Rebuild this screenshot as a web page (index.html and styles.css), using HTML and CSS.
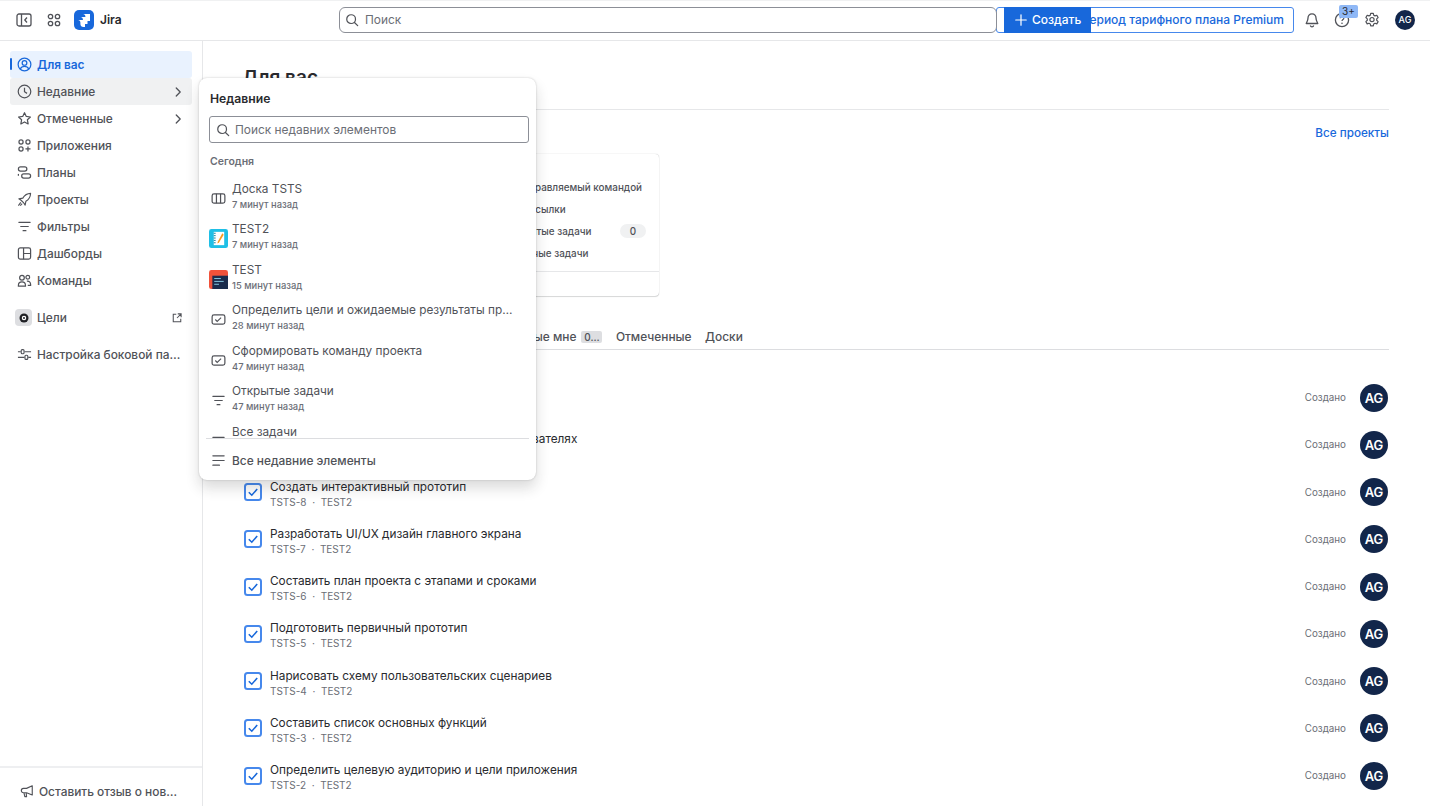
FILE: index.html
```html
<!DOCTYPE html>
<html lang="ru">
<head>
<meta charset="utf-8">
<title>Jira</title>
<link rel="stylesheet" href="styles.css">
</head>
<body>
<svg class="defs" width="0" height="0" aria-hidden="true">
  <symbol id="task" viewBox="0 0 18 18"><rect x="1" y="1" width="16" height="16" rx="2.5" fill="#fff" stroke="#4688ec" stroke-width="2"/><path d="M4.8 9.2l3 3 5.4-6.2" fill="none" stroke="#1868db" stroke-width="1.6"/></symbol>
  <symbol id="filter" viewBox="0 0 16 16"><path d="M2 3.5h12M4 8h8M6.5 12.5h3" fill="none" stroke="currentColor" stroke-width="1.3" stroke-linecap="round"/></symbol>
  <symbol id="chev" viewBox="0 0 16 16"><path d="M6 3.5L10.5 8 6 12.5" fill="none" stroke="currentColor" stroke-width="1.5" stroke-linecap="round" stroke-linejoin="round"/></symbol>
  <symbol id="mini" viewBox="0 0 16 16"><rect x="1.2" y="3" width="13.6" height="10" rx="2" fill="none" stroke="currentColor" stroke-width="1.3"/><path d="M4.6 8l2 2 4.2-4" fill="none" stroke="currentColor" stroke-width="1.2"/></symbol>
  <symbol id="search" viewBox="0 0 16 16"><circle cx="7" cy="7" r="5" fill="none" stroke="currentColor" stroke-width="1.4"/><path d="M10.8 10.8L14.5 14.5" stroke="currentColor" stroke-width="1.4" stroke-linecap="round"/></symbol>
</svg>

<header class="topbar">
  <div class="top-left">
    <svg class="ic" viewBox="0 0 16 16"><rect x="1" y="2" width="14" height="12" rx="2" fill="none" stroke="currentColor" stroke-width="1.3"/><path d="M5.5 2v12" stroke="currentColor" stroke-width="1.3"/><path d="M11 5.5L8.8 8l2.2 2.5" fill="none" stroke="currentColor" stroke-width="1.3"/></svg>
    <svg class="ic" viewBox="0 0 16 16"><g fill="none" stroke="currentColor" stroke-width="1.3"><circle cx="4.500" cy="4.500" r="2.200"/><circle cx="11.500" cy="4.500" r="2.200"/><circle cx="4.500" cy="11.500" r="2.200"/><circle cx="11.500" cy="11.500" r="2.200"/></g></svg>
    <div class="brand">
      <svg class="logo" viewBox="0 0 20 20"><rect width="20" height="20" rx="5" fill="#1868db"/><path d="M9 4h7v7h-1.600c-1.700 0-3-1.300-3-3V6.500C11.400 5.100 10.400 4 9 4zM6.500 7H13.500v7h-1.600c-1.700 0-3-1.300-3-3V9.500C8.900 8.100 7.900 7 6.500 7zM4 10h7v7H9.400c-1.700 0-3-1.300-3-3v-1.500C6.400 11.100 5.400 10 4 10z" fill="#fff"/></svg>
      <span class="brand-name">Jira</span>
    </div>
  </div>
  <div class="top-center">
    <div class="global-search">
      <svg class="ic-search" viewBox="0 0 16 16"><use href="#search"/></svg>
      <span>Поиск</span>
    </div>
    <div class="premium">Пробный период тарифного плана Premium</div>
    <button class="create"><svg class="plus" viewBox="0 0 16 16"><path d="M8 2v12M2 8h12" stroke="#fff" stroke-width="1.400" stroke-linecap="round"/></svg>Создать</button>
  </div>
  <div class="top-right">
    <svg class="ic" viewBox="0 0 16 16"><path d="M8 1.800c-2.600 0-4 2-4 4.200 0 3-1.500 4.500-1.800 5.500h11.600C13.500 10.500 12 9 12 6c0-2.200-1.400-4.200-4-4.200zM6.300 13.500c.3 1 1 1.300 1.700 1.300s1.400-.3 1.700-1.300" fill="none" stroke="currentColor" stroke-width="1.300" stroke-linejoin="round"/></svg>
    <div class="help">
      <svg class="ic" viewBox="0 0 16 16"><circle cx="8" cy="8" r="6.600" fill="none" stroke="currentColor" stroke-width="1.300"/><path d="M6.200 6.300c0-1 .8-1.700 1.800-1.700s1.800.7 1.800 1.600c0 1.300-1.800 1.400-1.800 2.800" fill="none" stroke="currentColor" stroke-width="1.200"/><circle cx="8" cy="11.300" r=".8" fill="currentColor"/></svg>
      <span class="badge">3+</span>
    </div>
    <svg class="ic" viewBox="0 0 16 16"><path d="M6.700 1.300h2.600l.4 1.900 1.300.7 1.800-.6 1.300 2.300-1.400 1.300v1.400l1.400 1.300-1.300 2.300-1.800-.6-1.300.7-.4 1.900H6.700l-.4-1.900-1.300-.7-1.800.6-1.300-2.300 1.400-1.300V6.900L1.900 5.600l1.300-2.300 1.800.6 1.300-.7z" fill="none" stroke="currentColor" stroke-width="1.200" stroke-linejoin="round"/><circle cx="8" cy="7.600" r="2.100" fill="none" stroke="currentColor" stroke-width="1.200"/></svg>
    <span class="avatar-small">AG</span>
  </div>
</header>

<div class="body-row">
  <aside class="sidebar">
    <nav class="nav">
      <a class="nav-item active"><svg class="ic" viewBox="0 0 16 16"><g fill="none" stroke="currentColor" stroke-width="1.300"><circle cx="8" cy="8" r="6.800"/><circle cx="8" cy="6.300" r="2.500"/><path d="M3.500 12.800c1-2 2.600-2.700 4.500-2.700s3.500.7 4.500 2.700"/></g></svg>Для вас</a>
      <a class="nav-item hover"><svg class="ic" viewBox="0 0 16 16"><circle cx="8" cy="8" r="6.700" fill="none" stroke="currentColor" stroke-width="1.300"/><path d="M8 4v4.300l2.700 1.700" fill="none" stroke="currentColor" stroke-width="1.300"/></svg>Недавние<svg class="chev" viewBox="0 0 16 16"><use href="#chev"/></svg></a>
      <a class="nav-item"><svg class="ic" viewBox="0 0 16 16"><path d="M8 1.800l1.900 4 4.400.6-3.200 3 .8 4.400L8 11.700l-3.900 2.100.8-4.400-3.200-3 4.400-.6z" fill="none" stroke="currentColor" stroke-width="1.300" stroke-linejoin="round"/></svg>Отмеченные<svg class="chev" viewBox="0 0 16 16"><use href="#chev"/></svg></a>
      <a class="nav-item"><svg class="ic" viewBox="0 0 16 16"><g fill="none" stroke="currentColor" stroke-width="1.300"><circle cx="4.300" cy="4.300" r="2.200"/><circle cx="11.700" cy="4.300" r="2.200"/><circle cx="4.300" cy="11.700" r="2.200"/><path d="M11.700 9v5.400M9 11.700h5.400"/></g></svg>Приложения</a>
      <a class="nav-item"><svg class="ic" viewBox="0 0 16 16"><g fill="none" stroke="currentColor" stroke-width="1.300"><rect x="1.500" y="2" width="9" height="4.500" rx="2.200"/><rect x="5" y="9.500" width="9.500" height="4.500" rx="2.200"/><path d="M1.500 9.500v2"/></g></svg>Планы</a>
      <a class="nav-item"><svg class="ic" viewBox="0 0 16 16"><g fill="none" stroke="currentColor" stroke-width="1.200" stroke-linejoin="round"><path d="M14.500 1.500c-4 .2-6.500 2-8.300 5L2 7.300l2.300 1.500 2.900 2.900 1.500 2.300.8-4.200c3-1.800 4.800-4.300 5-8.300z"/><path d="M4 11l-2.500 3.500M5.500 12.500L3.500 14.500"/></g></svg>Проекты</a>
      <a class="nav-item"><svg class="ic" viewBox="0 0 16 16"><use href="#filter"/></svg>Фильтры</a>
      <a class="nav-item"><svg class="ic" viewBox="0 0 16 16"><g fill="none" stroke="currentColor" stroke-width="1.300"><rect x="1.500" y="2" width="13" height="12" rx="2"/><path d="M7 2v12M7 8h7.500"/></g></svg>Дашборды</a>
      <a class="nav-item"><svg class="ic" viewBox="0 0 16 16"><g fill="none" stroke="currentColor" stroke-width="1.300"><circle cx="5.300" cy="5" r="2.500"/><circle cx="11.500" cy="4.600" r="2"/><path d="M1.500 14v-1c0-2 1.600-3.500 3.800-3.500s3.700 1.500 3.700 3.500v1zM10.500 8.700c2.500-.4 4 1.200 4 3.400v1h-3"/></g></svg>Команды</a>
      <a class="nav-item goals"><span class="goal-ic"><svg viewBox="0 0 16 16"><circle cx="8" cy="8" r="6" fill="#1f2024"/><circle cx="8" cy="8" r="3" fill="#fff"/><circle cx="8" cy="8" r="1.300" fill="#1f2024"/></svg></span>Цели<svg class="ext" viewBox="0 0 16 16"><path d="M7 3H3v10h10V9M9 2.500h4.500V7M13.500 2.500L8 8" fill="none" stroke="currentColor" stroke-width="1.400"/></svg></a>
      <a class="nav-item custom"><svg class="ic" viewBox="0 0 16 16"><g fill="none" stroke="currentColor" stroke-width="1.200"><path d="M1 5h3M8 5h7M1 11h7M12 11h3"/><rect x="4.500" y="2.800" width="3" height="4.400" rx="1"/><rect x="8.500" y="8.800" width="3" height="4.400" rx="1"/></g></svg><span class="clip">Настройка боковой панели</span></a>
    </nav>
    <div class="side-foot">
      <svg class="ic" viewBox="0 0 16 16"><path d="M14 2v10.500L7.500 10H4a2.500 2.500 0 0 1 0-5h3.500zM4.500 10l1 4.500h2L7 10" fill="none" stroke="currentColor" stroke-width="1.300" stroke-linejoin="round"/></svg>
      <span class="clip">Оставить отзыв о новом интерфейсе</span>
    </div>
  </aside>

  <main class="main">
    <h1 class="page-title">Для вас</h1>
    <div class="section-head"><a class="all-link">Все проекты</a></div>
    <div class="cards">
      <div class="card card-ghost"></div>
      <div class="card">
        <div class="card-body">
          <div class="card-line">Проект, управляемый командой</div>
          <div class="card-line">Быстрые ссылки</div>
          <div class="card-line">Мои открытые задачи<span class="pill">0</span></div>
          <div class="card-line">Выполненные задачи</div>
        </div>
        <div class="card-foot">1 доска</div>
      </div>
    </div>
    <div class="tabs">
      <span>Работал над</span>
      <span>Просмотрено</span>
      <span>Назначенные мне<b class="tab-count">0…</b></span>
      <span>Отмеченные</span>
      <span>Доски</span>
    </div>
    <ul class="rows">
      <li class="row"><svg class="chk"><use href="#task"/></svg><div class="row-text"><div class="row-title">Запустить бета-тестирование</div><div class="row-sub">TSTS-10 &nbsp;·&nbsp; TEST2</div></div><span class="status">Создано</span><span class="avatar">AG</span></li>
      <li class="row"><svg class="chk"><use href="#task"/></svg><div class="row-text"><div class="row-title">Провести опрос и получить данные о пользователях</div><div class="row-sub">TSTS-9 &nbsp;·&nbsp; TEST2</div></div><span class="status">Создано</span><span class="avatar">AG</span></li>
      <li class="row"><svg class="chk"><use href="#task"/></svg><div class="row-text"><div class="row-title">Создать интерактивный прототип</div><div class="row-sub">TSTS-8 &nbsp;·&nbsp; TEST2</div></div><span class="status">Создано</span><span class="avatar">AG</span></li>
      <li class="row"><svg class="chk"><use href="#task"/></svg><div class="row-text"><div class="row-title">Разработать UI/UX дизайн главного экрана</div><div class="row-sub">TSTS-7 &nbsp;·&nbsp; TEST2</div></div><span class="status">Создано</span><span class="avatar">AG</span></li>
      <li class="row"><svg class="chk"><use href="#task"/></svg><div class="row-text"><div class="row-title">Составить план проекта с этапами и сроками</div><div class="row-sub">TSTS-6 &nbsp;·&nbsp; TEST2</div></div><span class="status">Создано</span><span class="avatar">AG</span></li>
      <li class="row"><svg class="chk"><use href="#task"/></svg><div class="row-text"><div class="row-title">Подготовить первичный прототип</div><div class="row-sub">TSTS-5 &nbsp;·&nbsp; TEST2</div></div><span class="status">Создано</span><span class="avatar">AG</span></li>
      <li class="row"><svg class="chk"><use href="#task"/></svg><div class="row-text"><div class="row-title">Нарисовать схему пользовательских сценариев</div><div class="row-sub">TSTS-4 &nbsp;·&nbsp; TEST2</div></div><span class="status">Создано</span><span class="avatar">AG</span></li>
      <li class="row"><svg class="chk"><use href="#task"/></svg><div class="row-text"><div class="row-title">Составить список основных функций</div><div class="row-sub">TSTS-3 &nbsp;·&nbsp; TEST2</div></div><span class="status">Создано</span><span class="avatar">AG</span></li>
      <li class="row"><svg class="chk"><use href="#task"/></svg><div class="row-text"><div class="row-title">Определить целевую аудиторию и цели приложения</div><div class="row-sub">TSTS-2 &nbsp;·&nbsp; TEST2</div></div><span class="status">Создано</span><span class="avatar">AG</span></li>
    </ul>
  </main>
</div>

<section class="popup">
  <div class="popup-title">Недавние</div>
  <div class="popup-search"><svg class="ic-search" viewBox="0 0 16 16"><use href="#search"/></svg><span>Поиск недавних элементов</span></div>
  <div class="popup-list">
    <div class="popup-group">Сегодня</div>
    <div class="pitem"><span class="pico"><svg class="ic" viewBox="0 0 16 16"><g fill="none" stroke="currentColor" stroke-width="1.300"><rect x="1.200" y="3" width="13.600" height="10" rx="2"/><path d="M5.800 3v10M10.200 3v10"/></g></svg></span><div class="ptext"><div class="ptitle">Доска TSTS</div><div class="psub">7 минут назад</div></div></div>
    <div class="pitem"><span class="pico"><svg class="proj" viewBox="0 0 20 20"><rect width="20" height="20" rx="2.500" fill="#1fbfe6"/><rect x="5" y="3" width="11" height="14" fill="#fff"/><path d="M5 4.500h2M5 7h2M5 9.500h2M5 12h2M5 14.500h2" stroke="#0f7f9e" stroke-width="1"/><path d="M14 4.500L9.500 13l-.8 2.300 2-1.400L15.500 6z" fill="#f79a1f"/></svg></span><div class="ptext"><div class="ptitle">TEST2</div><div class="psub">7 минут назад</div></div></div>
    <div class="pitem"><span class="pico"><svg class="proj" viewBox="0 0 20 20"><rect width="20" height="20" rx="2.500" fill="#f1523a"/><rect x="3.500" y="6" width="16.500" height="14" fill="#1b2c4c"/><path d="M5.500 9h7M5.500 12h10M5.500 15h5" stroke="#8bd0e8" stroke-width="1"/></svg></span><div class="ptext"><div class="ptitle">TEST</div><div class="psub">15 минут назад</div></div></div>
    <div class="pitem"><span class="pico"><svg class="ic" viewBox="0 0 16 16"><use href="#mini"/></svg></span><div class="ptext"><div class="ptitle">Определить цели и ожидаемые результаты проекта</div><div class="psub">28 минут назад</div></div></div>
    <div class="pitem"><span class="pico"><svg class="ic" viewBox="0 0 16 16"><use href="#mini"/></svg></span><div class="ptext"><div class="ptitle">Сформировать команду проекта</div><div class="psub">47 минут назад</div></div></div>
    <div class="pitem"><span class="pico"><svg class="ic" viewBox="0 0 16 16"><use href="#filter"/></svg></span><div class="ptext"><div class="ptitle">Открытые задачи</div><div class="psub">47 минут назад</div></div></div>
    <div class="pitem"><span class="pico"><svg class="ic" viewBox="0 0 16 16"><use href="#filter"/></svg></span><div class="ptext"><div class="ptitle">Все задачи</div><div class="psub">47 минут назад</div></div></div>
  </div>
  <div class="popup-foot"><svg class="ic" viewBox="0 0 16 16"><path d="M2 3h12M2 8h12M2 13h7" fill="none" stroke="currentColor" stroke-width="1.300" stroke-linecap="round"/></svg>Все недавние элементы</div>
</section>
</body>
</html>
```

FILE: styles.css
```css
* { box-sizing: border-box; }
html, body { margin: 0; height: 100%; overflow: hidden; }
body {
  font-family: Inter, "Noto Sans", sans-serif;
  font-size: 11.900px;
  color: #292a2e;
  background: #fff;
  display: flex;
  flex-direction: column;
}
.defs { position: absolute; }
svg { display: block; flex: none; }
.ic { width: 16px; height: 16px; color: #505258; }

.topbar {
  height: 41px;
  flex: none;
  display: flex;
  align-items: center;
  border-top: 1px solid #f0f1f2;
  border-bottom: 1px solid #e6e7e9;
  padding-bottom: 2px;
  position: relative;
}
.top-left { display: flex; align-items: center; width: 339px; padding-left: 16px; gap: 14px; }
.brand { display: flex; align-items: center; gap: 6px; margin-left: -2px; }
.logo { width: 20px; height: 20px; }
.brand-name { font-weight: 600; font-size: 12px; }
.top-center { display: flex; position: relative; width: 955px; height: 26px; }
.global-search {
  width: 658px;
  border: 1px solid #8c8f97;
  border-radius: 6px;
  display: flex;
  align-items: center;
  gap: 6px;
  padding-left: 5px;
  color: #6b6e76;
  background: #fff;
  position: relative;
  z-index: 1;
}
.ic-search { width: 14px; height: 14px; color: #505258; }
.premium {
  width: 298px;
  margin-left: -1px;
  border: 1px solid #4688ec;
  border-radius: 3px;
  color: #1868db;
  display: flex;
  align-items: center;
  justify-content: flex-end;
  padding-right: 9px;
  white-space: nowrap;
  font-size: 12px;
  font-weight: 500;
}
.create {
  position: absolute;
  left: 665px;
  top: 0;
  width: 87px;
  height: 26px;
  border: 0;
  background: #1868db;
  color: #fff;
  font: 500 12px Inter, sans-serif;
  display: flex;
  align-items: center;
  gap: 4px;
  padding: 0 0 0 10px;
  z-index: 1;
}
.plus { width: 14px; height: 14px; }
.top-right { display: flex; align-items: center; gap: 14px; padding-left: 10px; }
.help { position: relative; }
.badge {
  position: absolute;
  left: 5px;
  top: -7px;
  width: 19px;
  height: 13px;
  border-radius: 2px;
  background: #8fb8f6;
  color: #292a2e;
  font-size: 10px;
  line-height: 13px;
  text-align: center;
}
.avatar-small {
  width: 20px;
  height: 20px;
  margin-left: 1px;
  border-radius: 50%;
  background: #12264a;
  color: #fff;
  font-size: 9px;
  font-weight: 500;
  line-height: 20px;
  text-align: center;
}

.body-row { flex: 1; display: flex; min-height: 0; }
.sidebar {
  width: 203px;
  flex: none;
  border-right: 1px solid #e6e7e9;
  display: flex;
  flex-direction: column;
}
.nav { flex: 1; padding: 10px 10px 0; min-height: 0; }
.nav-item {
  height: 27px;
  display: flex;
  align-items: center;
  gap: 5px;
  padding-left: 7px;
  padding-right: 7px;
  border-radius: 3px;
  color: #505258;
  font-weight: 500;
  white-space: nowrap;
  position: relative;
}
.nav-item .ic { width: 15px; height: 15px; }
.nav-item.active { background: #e9f2fe; color: #1868db; font-weight: 600; }
.nav-item.active .ic { color: #1868db; }
.nav-item.active::before {
  content: "";
  position: absolute;
  left: 0;
  top: 7px;
  width: 2px;
  height: 12px;
  background: #1868db;
  border-radius: 1px;
}
.nav-item.hover { background: #f0f1f2; }
.chev { width: 14px; height: 14px; margin-left: auto; color: #505258; }
.goals { margin-top: 10px; padding-left: 5px; gap: 5px; }
.goal-ic {
  width: 17px;
  height: 17px;
  border-radius: 4px;
  background: #dddee1;
  display: flex;
  align-items: center;
  justify-content: center;
}
.goal-ic svg { width: 12px; height: 12px; }
.ext { width: 12px; height: 12px; margin-left: auto; color: #505258; margin-right: 2px; }
.custom { margin-top: 10px; padding-right: 8px; }
.clip { overflow: hidden; text-overflow: ellipsis; white-space: nowrap; min-width: 0; }
.side-foot {
  height: 40px;
  border-top: 2px solid #eeeff1;
  display: flex;
  align-items: center;
  gap: 5px;
  padding: 8px 23px 0 20px;
  color: #505258;
  font-weight: 500;
}
.side-foot .ic { width: 14px; height: 14px; }

.main { flex: 1; min-width: 0; padding: 0 41px 0 41px; overflow: hidden; }
.page-title {
  margin: 0;
  height: 69px;
  padding-top: 25px;
  font-size: 19px;
  line-height: 24px;
  font-weight: 600;
  text-indent: -2px;
  border-bottom: 1px solid #e6e7e9;
}
.section-head { height: 44px; padding-top: 1px; display: flex; justify-content: flex-end; align-items: center; }
.all-link { color: #1868db; font-weight: 500; font-size: 11.700px; }
.cards { display: flex; gap: 1px; height: 142px; }
.card {
  width: 207px;
  border-radius: 4px;
  box-shadow: 0 0 1px rgba(30, 31, 33, .35), 0 1px 1px rgba(30, 31, 33, .15);
  display: flex;
  flex-direction: column;
  background: #fff;
}
.card-body { flex: 1; padding: 22px 13px 0 31px; }
.card-line {
  height: 22px;
  font-size: 9.900px;
  display: flex;
  align-items: center;
  justify-content: space-between;
  color: #505258;
  font-weight: 500;
  white-space: nowrap;
}
.pill {
  width: 26px;
  height: 14px;
  border-radius: 7px;
  background: #f0f1f2;
  text-align: center;
  line-height: 14px;
}
.card-foot { height: 25px; border-top: 1px solid #e6e7e9; padding: 5px 10px 5px 47px; font-size: 10px; color: #505258; }
.tabs {
  margin-top: 30px;
  height: 24px;
  display: flex;
  gap: 13.500px;
  padding-left: 45px;
  border-bottom: 1px solid #dcdde0;
  color: #505258;
  font-weight: 500;
  line-height: 22px;
  white-space: nowrap;
}
.tab-count {
  display: inline-block;
  width: 21px;
  height: 12px;
  margin-left: 5px;
  background: #dddee1;
  border-radius: 2px;
  font-size: 10px;
  line-height: 12px;
  text-align: center;
  font-weight: 500;
}
.rows { list-style: none; margin: 24px 0 0; padding: 0; }
.row { height: 47.250px; display: flex; align-items: center; }
.chk { width: 18px; height: 18px; margin-left: 0; margin-right: 8px; }
.row-text { flex: 1; min-width: 0; margin-top: 3px; }
.row-title { font-size: 11.800px; line-height: 16px; font-weight: 400; color: #292a2e; }
.row-sub { font-size: 10px; line-height: 13px; color: #6b6e76; margin-top: 1px; }
.status { font-size: 9.800px; color: #6b6e76; margin-right: 14px; }
.avatar {
  width: 28px;
  height: 28px;
  margin-right: 1px;
  border-radius: 50%;
  background: #12264a;
  color: #fff;
  font-size: 13px;
  font-weight: 600;
  line-height: 28px;
  text-align: center;
}

.popup {
  position: absolute;
  left: 199px;
  top: 78px;
  width: 337px;
  height: 402px;
  background: #fff;
  border-radius: 8px;
  box-shadow: 0 8px 14px rgba(30, 31, 33, .16), 0 0 2px rgba(30, 31, 33, .25);
  display: flex;
  flex-direction: column;
  padding: 0 7px;
}
.popup-title { font-weight: 600; font-size: 12.200px; height: 38px; line-height: 42px; padding-left: 4px; }
.popup-search {
  height: 27px;
  margin: 0 0 0 3px;
  border: 1px solid #8c8f97;
  border-radius: 3px;
  display: flex;
  align-items: center;
  gap: 5px;
  padding-left: 6px;
  color: #6b6e76;
  flex: none;
}
.popup-list { height: 295px; overflow: hidden; flex: none; }
.popup-group { font-size: 10.500px; font-weight: 600; color: #6b6e76; padding-left: 4px; height: 33px; line-height: 38px; }
.pitem { height: 40.500px; display: flex; align-items: center; gap: 4px; padding-left: 3px; }
.pico { width: 19px; display: flex; justify-content: center; flex: none; margin-top: 4px; }
.pico .ic { width: 15px; height: 15px; }
.proj { width: 19px; height: 19px; }
.ptext { min-width: 0; flex: 1; padding-right: 12px; }
.ptitle { font-size: 11.800px; line-height: 16px; color: #505258; white-space: nowrap; overflow: hidden; text-overflow: ellipsis; }
.psub { font-size: 9.400px; line-height: 14px; margin-top: 1px; color: #6b6e76; font-weight: 500; }
.popup-foot {
  flex: 1;
  border-top: 1px solid #dcdde0;
  display: flex;
  align-items: center;
  gap: 5px;
  padding: 2px 0 0 5px;
  color: #505258;
  font-weight: 500;
}
.popup-foot .ic { width: 15px; height: 15px; margin-right: 1px; }
```
